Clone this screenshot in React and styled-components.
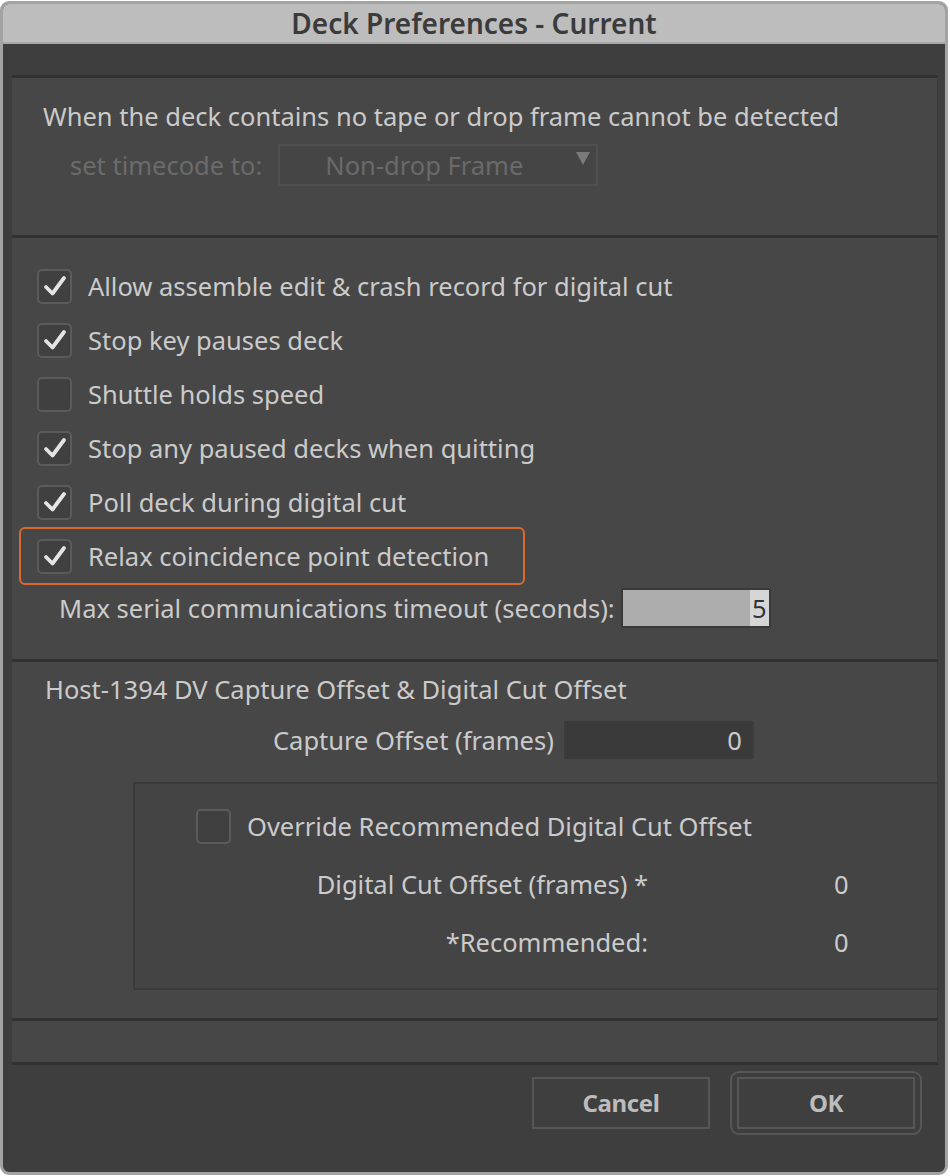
import React from 'react';
import styled, { createGlobalStyle } from 'styled-components';

const GlobalStyle = createGlobalStyle`
  html, body {
    margin: 0;
    padding: 0;
    background: #ffffff;
  }
  body {
    font-family: "Noto Sans", "Open Sans", sans-serif;
  }
`;

const Window = styled.div`
  box-sizing: border-box;
  width: 948px;
  height: 1174px;
  margin: 1px 0 0 0;
  border: 3px solid #a3a3a3;
  border-radius: 9px;
  background: #3e3e3e;
  overflow: hidden;
  display: flex;
  flex-direction: column;
`;

const TitleBar = styled.div`
  height: 38px;
  flex: none;
  background: #bdbdbd;
  border-bottom: 2px solid #a8a8a8;
  display: flex;
  align-items: center;
  justify-content: center;
  color: #3b3b3b;
  font-size: 28px;
  font-weight: 600;
`;

const Body = styled.div`
  flex: 1;
  display: flex;
  flex-direction: column;
  padding: 31px 7px 0 9px;
`;

const Section = styled.div`
  box-sizing: border-box;
  height: ${p => p.$h}px;
  flex: none;
  background: #474747;
  border-top: 3px solid #313131;
  border-right: 1px solid #3a3a3a;
  display: flex;
  flex-direction: column;
  padding: ${p => p.$pad || '0'};
  ${p => p.$last && 'border-bottom: 3px solid #313131;'}
`;

const Text = styled.div`
  color: ${p => (p.$dim ? '#6b6b6b' : '#cbcbcb')};
  font-size: 25.5px;
  white-space: nowrap;
`;

const Row = styled.div`
  display: flex;
  align-items: center;
  gap: ${p => p.$gap || 16}px;
  padding-left: ${p => p.$indent || 0}px;
  height: ${p => p.$h || 54}px;
`;

const Select = styled.div`
  box-sizing: border-box;
  width: 320px;
  height: 42px;
  border: 2px solid #505050;
  background: #454545;
  position: relative;
  display: flex;
  align-items: center;
  justify-content: center;
  padding-right: 28px;
  color: #6a6a6a;
  font-size: 25.5px;

  &::after {
    content: '';
    position: absolute;
    right: 6px;
    top: 6px;
    border-left: 7px solid transparent;
    border-right: 7px solid transparent;
    border-top: 13px solid #7a7a7a;
  }
`;

const CheckList = styled.div`
  display: flex;
  flex-direction: column;
  margin-left: 25px;
`;

const BoxWrap = styled.span`
  box-sizing: border-box;
  width: 35px;
  height: 35px;
  flex: none;
  border: 2px solid #5b5b5b;
  border-radius: 5px;
  background: #404040;
  display: flex;
  align-items: center;
  justify-content: center;
`;

const Highlight = styled.div`
  box-sizing: border-box;
  width: 506px;
  height: 58px;
  margin-left: -18px;
  padding-left: 16px;
  border: 2px solid #d9692c;
  border-radius: 6px;
  display: flex;
  align-items: center;
  gap: 16px;
  margin-top: -2px;
  margin-bottom: -2px;
`;

const NumInput = styled.div`
  box-sizing: border-box;
  width: ${p => p.$w}px;
  height: ${p => p.$hgt || 38}px;
  background: ${p => (p.$light ? '#adadad' : '#3a3a3a')};
  border: 2px solid ${p => (p.$light ? '#393939' : '#3c3c3c')};
  display: flex;
  align-items: center;
  justify-content: flex-end;
  font-size: 25.5px;
  color: ${p => (p.$light ? '#333333' : '#cbcbcb')};
  padding-right: ${p => (p.$light ? 0 : 10)}px;
`;

const Caret = styled.span`
  background: #d6d6d6;
  height: 100%;
  padding: 0 2px;
  display: flex;
  align-items: center;
`;

const Nested = styled.div`
  box-sizing: border-box;
  margin-left: 121px;
  margin-top: 9px;
  height: 208px;
  background: #444444;
  border-top: 2px solid #3a3a3a;
  border-left: 2px solid #3a3a3a;
  border-bottom: 2px solid #3a3a3a;
  padding: 22px 0 0 61px;
  display: flex;
  flex-direction: column;
`;

const ValueGrid = styled.div`
  display: grid;
  grid-template-columns: 452px 200px;
  row-gap: 24px;
  margin-top: 21px;
  align-items: center;
`;

const RightLabel = styled(Text)`
  text-align: right;
`;

const Value = styled(Text)`
  padding-left: 186px;
`;

const Footer = styled.div`
  flex: 1;
  display: flex;
  justify-content: flex-end;
  align-items: center;
  align-self: stretch;
  gap: 20px;
  padding: 0 16px 32px 0;
`;

const Button = styled.div`
  box-sizing: border-box;
  width: 178px;
  height: 52px;
  border: 2px solid #565656;
  background: #3f3f3f;
  display: flex;
  align-items: center;
  justify-content: center;
  color: #bcbcbc;
  font-size: 24px;
  font-weight: 700;
  letter-spacing: -0.4px;
`;

const DefaultRing = styled.div`
  box-sizing: border-box;
  padding: 4px 5px;
  border: 2px solid #575757;
  border-radius: 9px;
`;

const Check = () => (
  <svg width="24" height="22" viewBox="0 0 24 22">
    <path d="M3 12 L9.5 18.5 L21 3" fill="none" stroke="#e4e4e4" strokeWidth="3.8" strokeLinecap="round" strokeLinejoin="round" />
  </svg>
);

const CheckBox = ({ checked }) => <BoxWrap>{checked && <Check />}</BoxWrap>;

const options = [
  ['Allow assemble edit & crash record for digital cut', true],
  ['Stop key pauses deck', true],
  ['Shuttle holds speed', false],
  ['Stop any paused decks when quitting', true],
  ['Poll deck during digital cut', true],
];

export default function App() {
  return (
    <>
      <GlobalStyle />
      <Window>
        <TitleBar>Deck Preferences - Current</TitleBar>
        <Body>
          <Section $h={160} $pad="21px 0 0 31px">
            <Text>When the deck contains no tape or drop frame cannot be detected</Text>
            <Row $h={64} $indent={27} $gap={16}>
              <Text $dim>set timecode to:</Text>
              <Select>Non-drop Frame</Select>
            </Row>
          </Section>

          <Section $h={424} $pad="21px 0 0 0">
            <CheckList>
              {options.map(([label, on]) => (
                <Row key={label}>
                  <CheckBox checked={on} />
                  <Text>{label}</Text>
                </Row>
              ))}
              <Highlight>
                <CheckBox checked />
                <Text>Relax coincidence point detection</Text>
              </Highlight>
            </CheckList>
            <Row $h={50} $indent={47} $gap={6}>
              <Text>Max serial communications timeout (seconds):</Text>
              <NumInput $w={150} $hgt={40} $light>
                <Caret>5</Caret>
              </NumInput>
            </Row>
          </Section>

          <Section $h={359} $pad="9px 0 0 0">
            <Row $h={36} $indent={33}>
              <Text>Host-1394 DV Capture Offset &amp; Digital Cut Offset</Text>
            </Row>
            <Row $h={66} $indent={261} $gap={10}>
              <Text>Capture Offset (frames)</Text>
              <NumInput $w={190}>0</NumInput>
            </Row>
            <Nested>
              <Row $h={40}>
                <CheckBox />
                <Text>Override Recommended Digital Cut Offset</Text>
              </Row>
              <ValueGrid>
                <RightLabel>Digital Cut Offset (frames) *</RightLabel>
                <Value>0</Value>
                <RightLabel>*Recommended:</RightLabel>
                <Value>0</Value>
              </ValueGrid>
            </Nested>
          </Section>

          <Section $h={47} $last />

          <Footer>
            <Button>Cancel</Button>
            <DefaultRing>
              <Button>OK</Button>
            </DefaultRing>
          </Footer>
        </Body>
      </Window>
    </>
  );
}
